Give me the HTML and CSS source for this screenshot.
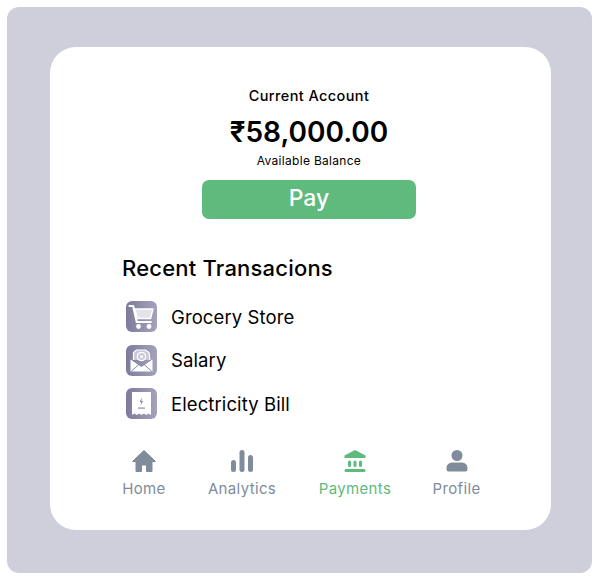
FILE: index.html
```html
<!DOCTYPE html>
<html lang="en">
<head>
  <meta charset="UTF-8" />
  <meta name="viewport" content="width=device-width, initial-scale=1.0"/>
  <title>Current Account</title>
  <link rel="stylesheet" href="styles.css">
</head>
<body>

<div class="frame">
  <div class="card">
    <div class="account">
      <div class="account-name">Current Account</div>
      <div class="amount">₹58,000.00</div>
      <div class="available">Available Balance</div>
      <button class="pay">Pay</button>
    </div>

    <h2 class="recent-title">Recent Transacions</h2>

    <div class="txn">
      <div class="txn-icon">
        <svg viewBox="0 0 31 31" width="31" height="31">
          <path d="M3.500 5h3.700l3.600 16h14" fill="none" stroke="#fff" stroke-width="2.200" stroke-linecap="round" stroke-linejoin="round"/>
          <path d="M9 8h18l-2.400 9.500H11.200z" fill="#e4e3ec" stroke="#fff" stroke-width="1.400" stroke-linejoin="round"/>
          <circle cx="12.500" cy="25.500" r="2.400" fill="#fff"/>
          <circle cx="23" cy="25.500" r="2.400" fill="#fff"/>
        </svg>
      </div>
      <span>Grocery Store</span>
    </div>
    <div class="txn">
      <div class="txn-icon">
        <svg viewBox="0 0 31 31" width="31" height="31">
          <path d="M7.500 15V7.500l3-2.500 9 0 3.500 2.500 1 7.500" fill="#c9c7d8" stroke="#fff" stroke-width="1.200"/>
          <circle cx="15.500" cy="11.500" r="4.200" fill="none" stroke="#fff" stroke-width="1.200"/>
          <circle cx="15.500" cy="11.500" r="1.500" fill="#fff"/>
          <path d="M4.500 14.500l11 7.500 11-7.500V26.500h-22z" fill="#fff"/>
          <path d="M5 26.500l8-7M26 26.500l-8-7" stroke="#8f8cab" stroke-width="1"/>
        </svg>
      </div>
      <span>Salary</span>
    </div>
    <div class="txn">
      <div class="txn-icon">
        <svg viewBox="0 0 31 31" width="31" height="31">
          <path d="M6 4h19v23l-2.400-1.500-2.300 1.500-2.400-1.500-2.400 1.500-2.400-1.500-2.300 1.500L8.400 25.500 6 27z" fill="#fff"/>
          <path d="M15.800 9.500l-2.300 4.500h1.700l-.5 3.500 2.500-4.500h-1.700z" fill="#8f8cab"/>
          <rect x="12" y="19.500" width="7" height="1.200" fill="#8f8cab"/>
        </svg>
      </div>
      <span>Electricity Bill</span>
    </div>

    <nav class="tabs">
      <a class="tab tab-home">
        <svg viewBox="0 0 24 24" width="24" height="24"><path d="M12 1.500L.5 12.500h3.500V22.500h5.500v-6.500h5v6.500H20V12.500h3.500z" fill="currentColor" stroke="currentColor" stroke-linejoin="round"/></svg>
        Home
      </a>
      <a class="tab tab-analytics">
        <svg viewBox="0 0 24 24" width="24" height="24">
          <rect x="1" y="11" width="5" height="12" rx="2.500" fill="currentColor"/>
          <rect x="9.500" y="1" width="5" height="22" rx="2.500" fill="currentColor"/>
          <rect x="18" y="6" width="5" height="17" rx="2.500" fill="currentColor"/>
        </svg>
        Analytics
      </a>
      <a class="tab tab-payments active">
        <svg viewBox="0 0 24 24" width="24" height="24">
          <path d="M12 1L1.500 6.500V9h21V6.500z" fill="currentColor"/>
          <rect x="5" y="11.500" width="3" height="6.500" rx="1.500" fill="currentColor"/>
          <rect x="10.500" y="11.500" width="3" height="6.500" rx="1.500" fill="currentColor"/>
          <rect x="16" y="11.500" width="3" height="6.500" rx="1.500" fill="currentColor"/>
          <rect x="1.500" y="20" width="21" height="3" rx="1.500" fill="currentColor"/>
        </svg>
        Payments
      </a>
      <a class="tab tab-profile">
        <svg viewBox="0 0 24 24" width="24" height="24">
          <circle cx="12" cy="6.500" r="5.500" fill="currentColor"/>
          <path d="M7 13.500h10a5.500 5.500 0 0 1 5.500 5.500v1.500a2 2 0 0 1-2 2H3.500a2 2 0 0 1-2-2V19A5.500 5.500 0 0 1 7 13.500z" fill="currentColor"/>
        </svg>
        Profile
      </a>
    </nav>
  </div>
</div>

</body>
</html>
```

FILE: styles.css
```css
html, body { margin: 0; height: 100%; background: #fff; }
body { font-family: "Inter", "DejaVu Sans", sans-serif; color: #000; }

.frame { box-sizing: border-box; width: 585px; height: 566px; margin: 7px 0 0 7px; padding: 40px 41px 43px 43px; background: #cfcfdb; border-radius: 12px; }
.card { box-sizing: border-box; height: 483px; background: #fff; border-radius: 26px; padding: 40px 0 0 72px; }

.account { width: 374px; display: flex; flex-direction: column; align-items: center; }
.account-name { font-size: 14.500px; font-weight: 500; line-height: 18px; letter-spacing: 0.4px; }
.amount { font-size: 28px; font-weight: 600; line-height: 36px; margin-top: 9px; }
.available { font-size: 12px; font-weight: 400; line-height: 16px; margin-top: 3px; letter-spacing: 0.3px; }
.pay { width: 214px; height: 39px; margin-top: 11px; border: 0; border-radius: 7px; background: #5fba7d; color: #fff; font-family: inherit; font-size: 23px; font-weight: 500; padding: 0 0 3px; }

.recent-title { margin: 35px 0 19px; font-size: 22px; font-weight: 500; line-height: 28px; letter-spacing: 0.2px; }

.txn { display: flex; align-items: center; gap: 14px; height: 31px; margin: 0 0 12.500px 4px; font-size: 18.500px; letter-spacing: 0.1px; }
.txn-icon { width: 31px; height: 31px; border-radius: 6px; background: linear-gradient(90deg, #7d7a9c, #a5a3ba); }
.txn-icon svg { display: block; }

.tabs { display: flex; gap: 42px; margin-top: 30px; color: #808c9b; }
.tab { display: flex; flex-direction: column; align-items: center; font-size: 15px; line-height: 20px; gap: 6px; letter-spacing: 0.35px; white-space: nowrap; }
.tab svg { display: block; }
.tab-home { width: 44px; }
.tab-analytics { width: 68px; }
.tab-payments { width: 74px; }
.tab-profile { width: 45px; }
.active { color: #5fba7d; }
```
